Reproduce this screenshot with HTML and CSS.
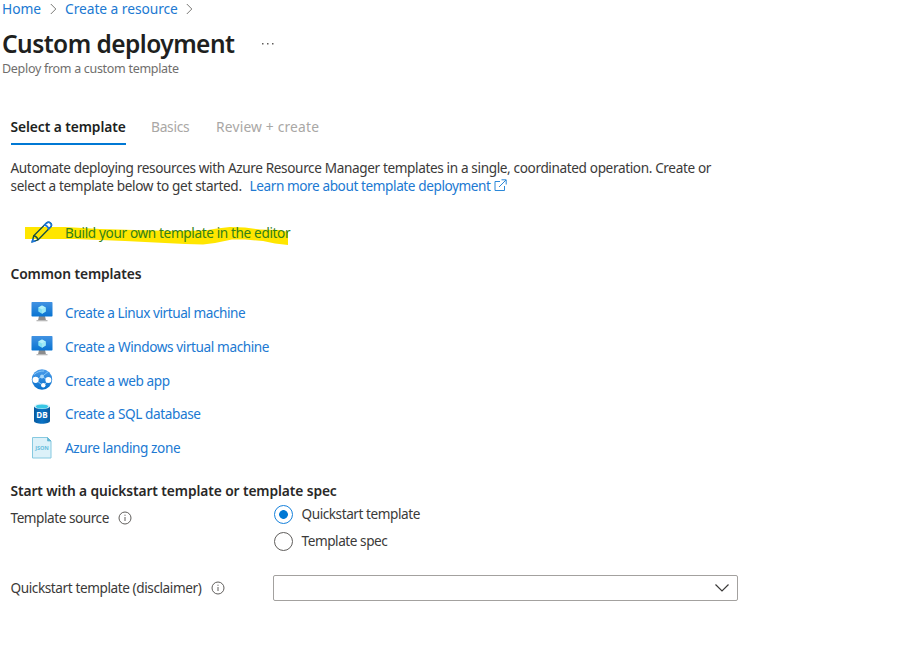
FILE: index.html
```html
<!DOCTYPE html>
<html lang="en">
<head>
<meta charset="utf-8">
<title>Custom deployment</title>
<link rel="stylesheet" href="styles.css">
</head>
<body>
<svg class="defs" aria-hidden="true">
  <defs>
    <linearGradient id="screen" x1="0" y1="0" x2="0" y2="1"><stop offset="0" stop-color="#4292e2"/><stop offset="1" stop-color="#0874d2"/></linearGradient>
    <linearGradient id="globe" x1="0" y1="0" x2="0" y2="1"><stop offset="0" stop-color="#4b9cea"/><stop offset="1" stop-color="#0870cc"/></linearGradient>
    <linearGradient id="barrel" x1="0" y1="0" x2="1" y2="0"><stop offset="0" stop-color="#075a9f"/><stop offset=".5" stop-color="#0a73c6"/><stop offset="1" stop-color="#075a9f"/></linearGradient>
    <symbol id="vm" viewBox="0 0 22 22">
      <path d="M8 14h6l1 4.500H7z" fill="#8c8c8c"/><path d="M5.500 18h11v1.300h-11z" fill="#b9b9b9"/>
      <rect x=".5" y="0" width="21" height="14.500" rx=".7" fill="url(#screen)"/>
      <path d="M11 3.500l3.700 2v4L11 11.700 7.300 9.500v-4z" fill="#83e1f4"/><path d="M11 3.500l3.700 2L11 7.600 7.300 5.500z" fill="#b5f1fb"/><path d="M11 7.600l3.700-2.100v4L11 11.700z" fill="#a0e9f7"/>
    </symbol>
    <symbol id="info" viewBox="0 0 14 14">
      <circle cx="7" cy="7" r="6" fill="none" stroke="#605e5c" stroke-width="1"/><path d="M7 6v4M7 3.700v1.100" stroke="#605e5c" stroke-width="1"/>
    </symbol>
  </defs>
</svg>
<nav class="crumbs">
  <a class="home">Home</a>
  <svg class="chev" viewBox="0 0 7 12"><path d="M.8 1l5 5-5 5"/></svg>
  <a class="resource">Create a resource</a>
  <svg class="chev" viewBox="0 0 7 12"><path d="M.8 1l5 5-5 5"/></svg>
</nav>
<header>
  <div class="heading"><h1>Custom deployment</h1><svg class="more" viewBox="0 0 14 4"><path d="M1 1h1.500v1.500H1zM6 1h1.500v1.500H6zM11 1h1.500v1.500H11z"/></svg></div>
  <p class="subtitle">Deploy from a custom template</p>
</header>
<main>
  <div class="tabs"><span class="tab active">Select a template</span><span class="tab basics">Basics</span><span class="tab review">Review + create</span></div>
  <div class="intro">
    <div class="line1">Automate deploying resources with Azure Resource Manager templates in a single, coordinated operation. Create or</div>
    <div class="line2"><span class="begin">select a template below to get started.</span><a class="learn">Learn more about template deployment</a><svg class="ext" viewBox="0 0 13 13"><path d="M6 2.500H1v9h9.500V7M7.500.8h4.700v4.700M12 1L5 8"/></svg></div>
  </div>
  <div class="build">
    <svg class="marker" viewBox="0 0 264 24"><path d="M0 4L40 4 75 6 110 7 150 8 180 7.500 192 5.500 205 4 220 4.500 235 6.500 255 7 263 9V22L250 20.500 238 18 220 16.500 207 16.500 190 20 178 21.500 160 21 100 18 50 16H0z"/></svg>
    <svg class="pencil" viewBox="0 0 22 22"><path d="M1.200 20.800l1.500-6L15.500 2c1.300-1.300 3-.9 4 .1s1.400 2.600.1 3.900L7 19z" /><path d="M2.700 14.800c2 .3 3.700 2 4.300 4.200" /><path d="M15.500 2c1.300-1.300 3-.9 4 .1s1.400 2.600.1 3.900l-2 2c-.4-2-2-3.600-4.100-4z" class="tip"/><path d="M4.500 20L1.200 20.800l.8-3.300" class="tip"/></svg>
    <a class="buildtext">Build your own template in the editor</a>
  </div>
  <h2 class="common">Common templates</h2>
  <ul class="templates">
    <li><svg viewBox="0 0 22 22"><use href="#vm"/></svg><a class="linux">Create a Linux virtual machine</a></li>
    <li><svg viewBox="0 0 22 22"><use href="#vm"/></svg><a class="windows">Create a Windows virtual machine</a></li>
    <li><svg viewBox="0 0 22 22"><circle cx="11" cy="10.500" r="10.200" fill="url(#globe)"/><path d="M4.800 11L11 7.500l6.300 4M4.800 11l7.500 5.800L17.300 11.500M11 7.500L17 2.800M3 5.500C6 3 9 2 13 2" fill="none" stroke="#83c5f7" stroke-width="1"/><circle cx="4.600" cy="10.800" r="3.100" fill="#fff"/><circle cx="11" cy="7.500" r="1.900" fill="#a9d8fa"/><circle cx="17.400" cy="11" r="3" fill="#fff"/><circle cx="12.300" cy="16.300" r="2.200" fill="#fff"/></svg><a class="web">Create a web app</a></li>
    <li><svg viewBox="0 0 22 22"><path d="M3 3.500v14.500c0 1.700 3.600 2.700 8 2.700s8-1 8-2.700V3.500z" fill="url(#barrel)"/><ellipse cx="11" cy="3.300" rx="8" ry="2.800" fill="#e0f4fa"/><ellipse cx="11" cy="3.500" rx="6.300" ry="2" fill="#38c7e5"/><text x="11" y="15" class="db">DB</text></svg><a class="sql">Create a SQL database</a></li>
    <li><svg viewBox="0 0 22 22"><path d="M1.500.5h15L20 4v17H1.500z" fill="#dcf1f9" stroke="#86c9e0"/><path d="M16.500.5V4H20z" fill="#62b6d3" stroke="#62b6d3" stroke-width=".7"/><text x="11" y="12.700" class="json">JSON</text></svg><a class="landing">Azure landing zone</a></li>
  </ul>
  <h2 class="start">Start with a quickstart template or template spec</h2>
  <div class="field source">
    <div class="label"><span class="srclabel">Template source</span><svg class="info"><use href="#info"/></svg></div>
    <div class="radios">
      <div class="option"><i class="radio on"></i><span class="qs">Quickstart template</span></div>
      <div class="option"><i class="radio"></i><span class="spec">Template spec</span></div>
    </div>
  </div>
  <div class="field quick">
    <div class="label"><span class="quicklabel">Quickstart template (disclaimer)</span><svg class="info"><use href="#info"/></svg></div>
    <div class="select"><svg viewBox="0 0 16 10"><path d="M1.500 1.500L8 8l6.500-6.500"/></svg></div>
  </div>
</main>
</body>
</html>
```
FILE: styles.css
```css
* { box-sizing: border-box; }
body { margin: 0; background: #fff; color: #3b3a39; font: 13.6px/18px "Noto Sans", "Open Sans", sans-serif; letter-spacing: -.4px; white-space: nowrap; overflow: hidden; }
svg { display: block; flex: none; }
.defs { width: 0; height: 0; position: absolute; }
a { color: #2079d2; }
h1, h2, p, ul { margin: 0; padding: 0; }
.crumbs { display: flex; align-items: center; height: 18px; padding-left: 2px; font-size: 13.8px; letter-spacing: -.06px; }
.home { width: 40px; }
.resource { width: 113px; }
.chev { width: 7px; height: 12px; margin: 0 8px; fill: none; stroke: #7a7876; }
header { padding: 7px 0 0 2px; }
.heading { display: flex; align-items: center; height: 36px; }
h1 { width: 233px; margin-top: 2px; font-size: 24.5px; line-height: 36px; letter-spacing: -.55px; font-weight: 600; color: #201f1e; }
.more { width: 14px; height: 4px; margin: 2px 0 0 26px; fill: #605e5c; }
.subtitle { font-size: 12.5px; line-height: 16px; letter-spacing: -.3px; color: #706e6c; }
main { padding-left: 10.5px; }
.tabs { display: flex; margin-top: 41px; height: 27px; font-size: 13.8px; color: #a9a7a5; }
.active { width: 115px; border-bottom: 2px solid #0078d4; letter-spacing: -.08px; font-weight: 600; color: #201f1e; }
.basics { margin-left: 25.500px; width: 39px; letter-spacing: -.3px; }
.review { margin-left: 26px; letter-spacing: .18px; }
.intro { margin-top: 14px; }
.line1 { letter-spacing: -.37px; }
.line2 { display: flex; align-items: center; }
.begin { width: 239px; letter-spacing: -.34px; }
.learn { width: 241px; letter-spacing: -.41px; }
.ext { width: 13px; height: 13px; margin: -2px 0 0 3.500px; fill: none; stroke: #2b88d8; }
.build { position: relative; display: flex; align-items: center; height: 24px; margin: 26px 0 0 20.500px; }
.marker { position: absolute; left: -6px; top: 2px; width: 264px; height: 24px; fill: #ffe600; }
.pencil { position: relative; width: 22px; height: 22px; margin-top: -2px; fill: none; stroke: #174e43; stroke-width: 1.400; }
.pencil .tip { stroke: #1673dd; }
.buildtext { position: relative; margin-left: 12px; letter-spacing: -.36px; color: #328018; }
h2 { font-size: 13.8px; line-height: 18px; letter-spacing: -.11px; font-weight: 600; color: #292827; }
.common { margin-top: 20px; }
.templates { list-style: none; margin: 13.500px 0 0 20.500px; }
.templates li { display: flex; align-items: center; gap: 12px; height: 33.7px; letter-spacing: -.4px; }
.templates svg { width: 22px; height: 22px; margin-top: -1px; }
.templates .linux { letter-spacing: -.44px; }
.db { font: 700 8px "Open Sans", sans-serif; fill: #fff; text-anchor: middle; letter-spacing: 0; }
.json { font: 700 5.500px "Open Sans", sans-serif; fill: #67bddd; text-anchor: middle; letter-spacing: 0; }
.start { margin-top: 17.500px; }
.field { display: flex; }
.label { display: flex; align-items: center; gap: 9px; width: 263px; height: 18px; }
.info { width: 14px; height: 14px; }
.srclabel { width: 98.500px; letter-spacing: -.46px; }
.quicklabel { width: 191px; letter-spacing: -.41px; }
.source .label { margin-top: 9px; }
.option { display: flex; align-items: center; gap: 9px; height: 27px; letter-spacing: -.44px; }
.radios { padding-top: .5px; }
.radio { width: 19px; height: 19px; border: 1px solid #605e5c; border-radius: 50%; }
.radio.on { border-color: #1681db; background: radial-gradient(circle, #0078d4 4px, transparent 4.700px); }
.quick { align-items: center; margin-top: 20.500px; }
.select { display: flex; justify-content: flex-end; align-items: center; width: 465px; height: 26px; padding-right: 7px; border: 1px solid #a3a19f; border-radius: 2px; margin-left: -.5px; }
.select svg { width: 16px; height: 10px; fill: none; stroke: #3b3a39; stroke-width: 1.200; }
```
